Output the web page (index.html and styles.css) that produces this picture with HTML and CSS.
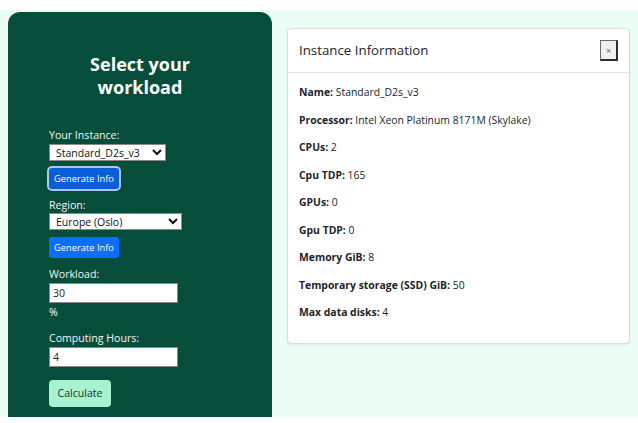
FILE: index.html
```html
<!DOCTYPE html>
<html lang="en">
<head>
<meta charset="utf-8">
<title>Select your workload</title>
<link rel="stylesheet" href="styles.css">
</head>
<body>
<main class="page">
  <section class="panel">
    <h1 class="panel-title">Select your workload</h1>
    <form class="form">
      <label class="label" for="inst">Your Instance:</label>
      <select id="inst" class="select select-inst"><option>Standard_D2s_v3</option></select>
      <button type="button" class="btn-gen btn-focus">Generate Info</button>
      <label class="label" for="region">Region:</label>
      <select id="region" class="select select-region"><option>Europe (Oslo)</option></select>
      <button type="button" class="btn-gen">Generate Info</button>
      <label class="label" for="wl">Workload:</label>
      <input id="wl" class="field" type="text" value="30">
      <p class="unit">%</p>
      <label class="label" for="hrs">Computing Hours:</label>
      <input id="hrs" class="field" type="text" value="4">
      <button type="button" class="btn-calc">Calculate</button>
    </form>
  </section>
  <section class="card">
    <header class="card-header">
      <h2 class="card-title">Instance Information</h2>
      <button type="button" class="btn-close">×</button>
    </header>
    <div class="card-body">
      <p class="row"><b>Name:</b> Standard_D2s_v3</p>
      <p class="row"><b>Processor:</b> Intel Xeon Platinum 8171M (Skylake)</p>
      <p class="row"><b>CPUs:</b> 2</p>
      <p class="row"><b>Cpu TDP:</b> 165</p>
      <p class="row"><b>GPUs:</b> 0</p>
      <p class="row"><b>Gpu TDP:</b> 0</p>
      <p class="row"><b>Memory GiB:</b> 8</p>
      <p class="row"><b>Temporary storage (SSD) GiB:</b> 50</p>
      <p class="row"><b>Max data disks:</b> 4</p>
    </div>
  </section>
</main>
</body>
</html>
```
FILE: styles.css
```css
* { box-sizing: border-box; }
html, body {
  margin: 0;
  background: #ffffff;
  font-family: "Open Sans", "Noto Sans", sans-serif;
  font-size: 11px;
  line-height: 1.5;
  color: #212529;
}
.page {
  margin-top: 10px;
  height: 407px;
  overflow: hidden;
  background: #ecfdf5;
  display: flex;
  gap: 15px;
  padding: 2px 8px 0 8px;
}
.panel {
  width: 264px;
  flex: none;
  background: #064e3b;
  border-radius: 12px 12px 0 0;
  padding: 41px 0 0 41px;
  color: #ffffff;
}
.panel-title {
  margin: 0 0 29px -41px;
  width: 264px;
  padding: 0 70px;
  text-align: center;
  font-size: 18px;
  line-height: 22.5px;
  font-weight: 700;
}
.form {
  display: flex;
  flex-direction: column;
  align-items: flex-start;
}
.label {
  display: block;
  font-size: 10.6px;
  line-height: 16.5px;
  color: #f2f7f4;
}
.select {
  height: 17px;
  font-family: inherit;
  font-size: 10.5px;
  padding: 0 2px;
  border: 1px solid #8a8a8a;
  border-radius: 0;
  background: #fff;
  color: #111;
}
.select-inst { width: 117px; }
.select-region { width: 133px; }
.btn-gen {
  margin: 7px 0 8px 0;
  height: 21px;
  width: 70px;
  padding: 0;
  border: 0;
  border-radius: 3px;
  background: #0d6efd;
  color: #fff;
  font-family: inherit;
  font-size: 9.3px;
}
.btn-focus {
  background: #0b5ed7;
  box-shadow: 0 0 0 2px #a8c8f5;
}
.field {
  width: 129px;
  height: 20px;
  border: 1px solid #8a8a8a;
  padding: 0 3px;
  font-family: inherit;
  font-size: 10.6px;
  color: #222;
}
.unit {
  margin: 1px 0 10px 0;
  line-height: 16.5px;
  font-size: 10.6px;
}
.btn-calc {
  margin-top: 13px;
  width: 62px;
  height: 27px;
  padding: 0;
  border: 0;
  border-radius: 4px;
  background: #a7f3d0;
  color: #1f2f28;
  font-family: inherit;
  font-size: 10.6px;
}
.card {
  flex: 1;
  align-self: flex-start;
  margin-top: 16px;
  background: #fff;
  border: 1px solid #d9dedb;
  border-radius: 4px;
  box-shadow: 0 1px 2px rgba(0,0,0,0.08);
}
.card-header {
  display: flex;
  justify-content: space-between;
  align-items: center;
  padding: 11px;
  border-bottom: 1px solid #dfe3e1;
}
.card-title {
  margin: 0;
  font-size: 13.3px;
  line-height: 21px;
  font-weight: 400;
}
.btn-close {
  width: 18px;
  height: 21px;
  padding: 0;
  background: #efefef;
  border: 1px solid #6b6b6b;
  border-right: 2px solid #2b2b2b;
  border-bottom: 2px solid #2b2b2b;
  color: #666;
  font-size: 9px;
  line-height: 1;
  font-family: inherit;
}
.card-body {
  padding: 11px;
  font-size: 10.4px;
}
.row {
  margin: 0 0 11px 0;
  line-height: 16.5px;
}
.row b { font-weight: 700; }
```
